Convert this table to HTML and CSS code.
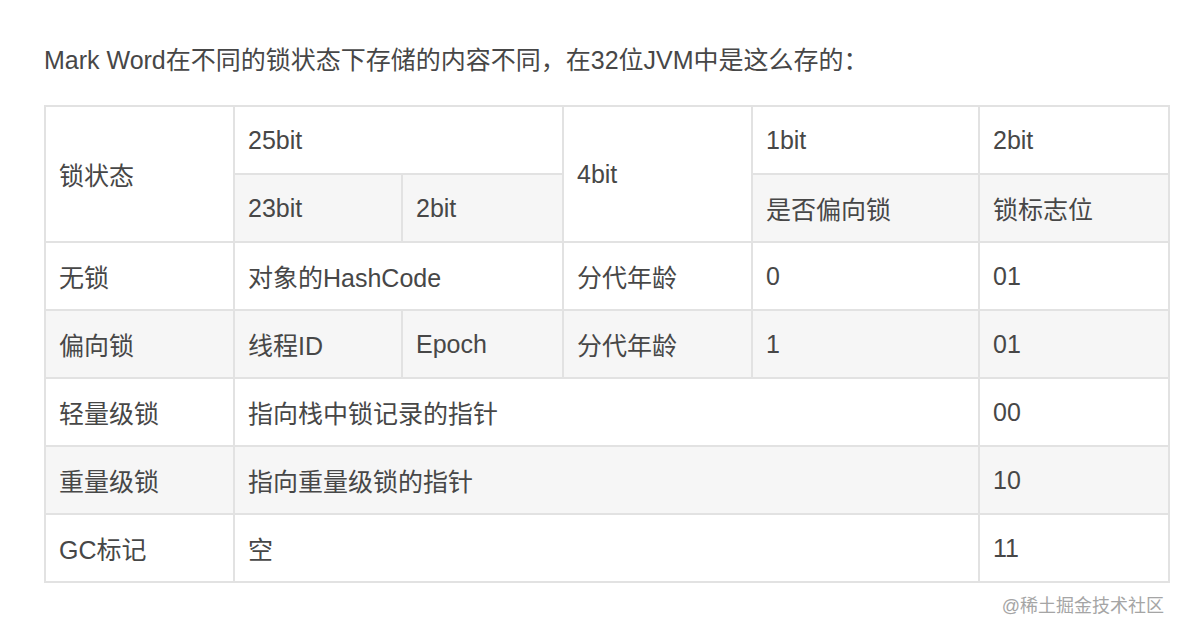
FILE: index.html
```html
<!DOCTYPE html>
<html lang="zh-CN">
<head>
<meta charset="utf-8">
<link rel="stylesheet" href="styles.css">
</head>
<body>
<div class="article">
  <p class="intro">Mark Word在不同的锁状态下存储的内容不同，在32位JVM中是这么存的：</p>
  <table class="mw">
    <colgroup>
      <col class="c1"><col class="c2"><col class="c3"><col class="c4"><col class="c5"><col class="c6">
    </colgroup>
    <tr>
      <td rowspan="2">锁状态</td>
      <td colspan="2">25bit</td>
      <td rowspan="2">4bit</td>
      <td>1bit</td>
      <td>2bit</td>
    </tr>
    <tr class="alt">
      <td>23bit</td>
      <td>2bit</td>
      <td>是否偏向锁</td>
      <td>锁标志位</td>
    </tr>
    <tr>
      <td>无锁</td>
      <td colspan="2">对象的HashCode</td>
      <td>分代年龄</td>
      <td>0</td>
      <td>01</td>
    </tr>
    <tr class="alt">
      <td>偏向锁</td>
      <td>线程ID</td>
      <td>Epoch</td>
      <td>分代年龄</td>
      <td>1</td>
      <td>01</td>
    </tr>
    <tr>
      <td>轻量级锁</td>
      <td colspan="4">指向栈中锁记录的指针</td>
      <td>00</td>
    </tr>
    <tr class="alt">
      <td>重量级锁</td>
      <td colspan="4">指向重量级锁的指针</td>
      <td>10</td>
    </tr>
    <tr>
      <td>GC标记</td>
      <td colspan="4">空</td>
      <td>11</td>
    </tr>
  </table>
  <div class="mark">@稀土掘金技术社区</div>
</div>
</body>
</html>
```
FILE: styles.css
```css
html, body {
  margin: 0;
  padding: 0;
  background: #fff;
}
body {
  font-family: "Liberation Sans", Arial, "Noto Sans CJK SC", sans-serif;
  color: #474747;
}
.article {
  padding: 0 13px 0 44px;
}
.intro {
  margin: 0;
  padding-top: 44px;
  font-size: 25px;
  line-height: 32px;
  color: #474747;
}
.mw {
  margin-top: 29px;
  border-collapse: collapse;
  width: 1124px;
  table-layout: fixed;
  font-size: 25px;
}
.c1 { width: 189px; }
.c2 { width: 168px; }
.c3 { width: 161px; }
.c4 { width: 189px; }
.c5 { width: 227px; }
.c6 { width: 190px; }
.mw td {
  border: 2px solid #e2e2e2;
  height: 68px;
  padding: 0 13px;
  box-sizing: border-box;
  vertical-align: middle;
  color: #474747;
}
.mw tr.alt td {
  background: #f6f6f6;
}
.mw tr.alt td[rowspan] {
  background: #fff;
}
.mark {
  text-align: right;
  font-size: 18px;
  color: #a5a5a5;
  margin-top: 8px;
  padding-right: 5px;
}
```
